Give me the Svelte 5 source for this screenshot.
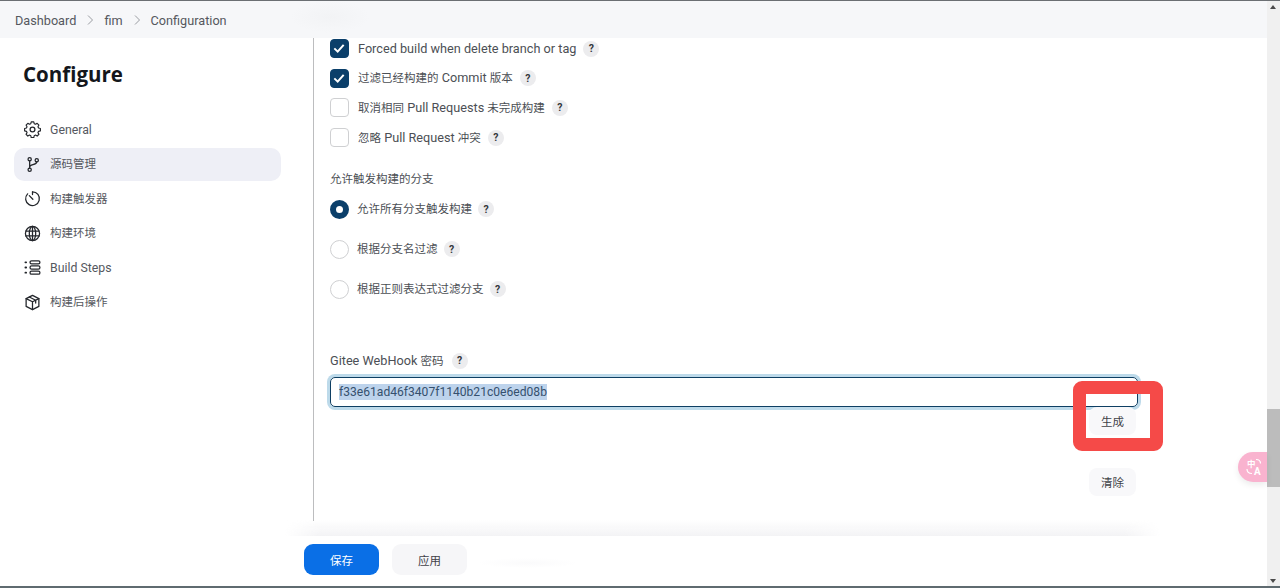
<script>
  const crumbs = ['Dashboard', 'fim', 'Configuration'];
  const nav = [
    { id: 'gear', label: 'General' },
    { id: 'branch', label: '源码管理', active: true },
    { id: 'timer', label: '构建触发器' },
    { id: 'globe', label: '构建环境' },
    { id: 'list', label: 'Build Steps' },
    { id: 'cube', label: '构建后操作' }
  ];
  const checks = [
    { label: 'Forced build when delete branch or tag', on: true },
    { label: '过滤已经构建的 Commit 版本', on: true },
    { label: '取消相同 Pull Requests 未完成构建', on: false },
    { label: '忽略 Pull Request 冲突', on: false }
  ];
  const radios = [
    { label: '允许所有分支触发构建', on: true },
    { label: '根据分支名过滤', on: false },
    { label: '根据正则表达式过滤分支', on: false }
  ];

  // chinese runs are set smaller than the latin ones
  const runs = (s) => s.split(/([\u4e00-\u9fff]+)/).filter(Boolean);
  const isZh = (s) => /[\u4e00-\u9fff]/.test(s);
</script>

{#snippet mixed(text)}
  <span class="mixed">{#each runs(text) as r}<span class:cjk={isZh(r)}>{r}</span>{/each}</span>
{/snippet}

<div class="page">
  <div class="col">
    <header class="crumbs">
      {#each crumbs as c, i}
        {#if i > 0}
          <svg class="chev" viewBox="0 0 10 12"><path d="M3 1.5 7.5 6 3 10.5" /></svg>
        {/if}
        <span>{c}</span>
      {/each}
    </header>

    <div class="body">
      <aside class="side">
        <h1>Configure</h1>
        <nav>
          {#each nav as n}
            <div class="nav-item" class:active={n.active}>
              <svg class="ico" viewBox="0 0 24 24">
                {#if n.id === 'gear'}
                  <circle cx="12" cy="12" r="3.400" />
                  <path d="M10 2.200h4l.7 2.900 2 .9 2.600-1.500 2.800 2.800-1.500 2.600.9 2 2.900.7v3.800l-2.900.7-.9 2 1.500 2.600-2.800 2.800-2.600-1.500-2 .9-.7 2.900h-4l-.7-2.900-2-.9-2.600 1.500-2.800-2.800 1.500-2.600-.9-2-2.900-.7v-3.800l2.900-.7.900-2-1.500-2.600 2.800-2.800 2.600 1.500 2-.9z" transform="translate(1.200 -.8) scale(.9)" />
                {:else if n.id === 'branch'}
                  <circle cx="8" cy="4.500" r="2.300" />
                  <circle cx="8" cy="19.500" r="2.300" />
                  <circle cx="18" cy="6" r="2.300" />
                  <path d="M8 6.800v10.400M8 15.500c0-4 9.800-2.500 10-7.200" />
                {:else if n.id === 'timer'}
                  <path d="M12 2.500a9.700 9.700 0 1 1-6.900 2.900" />
                  <path d="M12 2.500v4M12.500 13 7.500 8" />
                {:else if n.id === 'globe'}
                  <circle cx="12" cy="12" r="10" />
                  <ellipse cx="12" cy="12" rx="4.500" ry="10" />
                  <path d="M12 2v20M2.500 8.500h19M2.500 15.500h19" />
                {:else if n.id === 'list'}
                  <rect x="8.500" y="2.500" width="14" height="4.400" rx="2.200" />
                  <rect x="8.500" y="9.800" width="14" height="4.400" rx="2.200" />
                  <rect x="8.500" y="17.100" width="14" height="4.400" rx="2.200" />
                  <path class="dots" d="M2 4.700h1M2 12h1M2 19.300h1" />
                {:else}
                  <path d="M12 2 21 6.500v11L12 22 3 17.500v-11z" />
                  <path d="M3 6.500 12 11l9-4.500M12 11v11M7.500 4.300l9 4.500v4" />
                {/if}
              </svg>
              {@render mixed(n.label)}
            </div>
          {/each}
        </nav>
      </aside>

      <main class="form">
        <div class="checks">
          {#each checks as c}
            <div class="row">
              <span class="box" class:on={c.on}>
                {#if c.on}
                  <svg viewBox="0 0 12 12"><path d="M2.500 6.300 5 8.700 9.500 3.600" /></svg>
                {/if}
              </span>
              {@render mixed(c.label)}
              <span class="help">?</span>
            </div>
          {/each}
        </div>

        <div class="label sect">{@render mixed('允许触发构建的分支')}</div>
        <div class="radios">
          {#each radios as r}
            <div class="row">
              <span class="radio" class:on={r.on}></span>
              {@render mixed(r.label)}
              <span class="help">?</span>
            </div>
          {/each}
        </div>

        <div class="label hook">{@render mixed('Gitee WebHook 密码')}<span class="help">?</span></div>
        <div class="input"><span class="sel">f33e61ad46f3407f1140b21c0e6ed08b</span></div>
        <div class="actions">
          <button class="gen">生成</button>
          <button class="clear">清除</button>
        </div>
      </main>
    </div>

    <footer class="bar">
      <button class="save">保存</button>
      <button class="apply">应用</button>
    </footer>
  </div>

  <div class="track">
    <span class="arrow up"></span>
    <div class="thumb"></div>
    <span class="arrow down"></span>
  </div>

  <div class="mark"></div>
  <div class="bubble">
    <svg viewBox="0 0 29 30">
      <path d="M18 7.500c3 0 4.500 1.500 4.500 4M9 17c0 3 2 4.500 5 4.500" />
    </svg>
    <span class="zh">中</span><span class="en">A</span>
  </div>
</div>

<style>
  :global(body) {
    margin: 0;
    background: #fff;
  }
  .page {
    position: relative;
    width: 1280px;
    height: 588px;
    overflow: hidden;
    display: flex;
    border-top: 1px solid #6b6f73;
    border-bottom: 2px solid #5f6b70;
    box-sizing: border-box;
    font-family: Roboto, "Noto Sans CJK SC", sans-serif;
    font-size: 12.700px;
    color: #3f4248;
  }
  .mixed {
    line-height: 16px;
  }
  .cjk {
    font-size: 11.500px;
  }
  .col {
    flex: 1;
    min-width: 0;
    display: flex;
    flex-direction: column;
  }
  .crumbs {
    height: 37px;
    flex-shrink: 0;
    display: flex;
    align-items: center;
    padding: 1px 0 0 15px;
    box-sizing: border-box;
    background: radial-gradient(ellipse 40px 16px at 330px 16px, #f2f3f5, #f6f7f9);
    color: #55585e;
  }
  .chev {
    width: 10px;
    height: 12px;
    margin: 0 9px 0 9px;
    fill: none;
    stroke: #9a9da2;
    stroke-width: 1;
  }
  .body {
    flex: 1;
    min-height: 0;
    display: flex;
  }
  .side {
    width: 314px;
    flex-shrink: 0;
    box-sizing: border-box;
    padding: 0 32px 0 14px;
    margin-bottom: 15px;
    border-right: 1px solid #bcbdbf;
  }
  h1 {
    margin: 22px 0 0 9px;
    font-family: "Open Sans", sans-serif;
    font-size: 20.500px;
    line-height: 28px;
    font-weight: 700;
    color: #14171c;
  }
  nav {
    margin-top: 25px;
    display: flex;
    flex-direction: column;
    gap: 1.600px;
  }
  .nav-item {
    height: 33px;
    display: flex;
    align-items: center;
    gap: 9px;
    padding-left: 10px;
    border-radius: 10px;
    color: #55585e;
    font-size: 12.300px;
  }
  .nav-item.active {
    background: #eeeff6;
  }
  .ico {
    width: 17px;
    height: 17px;
    flex-shrink: 0;
    fill: none;
    stroke: #23262b;
    stroke-width: 1.800;
    stroke-linejoin: round;
    stroke-linecap: round;
  }
  .ico .dots {
    stroke-width: 2.600;
  }
  .form {
    flex: 1;
    min-width: 0;
    box-sizing: border-box;
    padding: 0 0 0 16px;
    margin-top: -4px;
  }
  .checks .row {
    height: 29.600px;
    gap: 9px;
  }
  .row {
    display: flex;
    align-items: center;
    color: #4c4f55;
  }
  .box {
    width: 19px;
    height: 19px;
    box-sizing: border-box;
    border: 1.500px solid #cfd0d2;
    border-radius: 4px;
    display: flex;
    flex-shrink: 0;
  }
  .box.on {
    background: #0b3f6a;
    border-color: #0b3f6a;
  }
  .box svg {
    width: 16px;
    height: 16px;
    fill: none;
    stroke: #fff;
    stroke-width: 1.500;
  }
  .help {
    display: inline-flex;
    align-items: center;
    justify-content: center;
    width: 16px;
    height: 16px;
    border-radius: 50%;
    background: #ececee;
    color: #33363b;
    font-size: 10.500px;
    font-weight: 700;
  }
  .checks .help,
  .radios .help {
    margin-left: -2px;
  }
  .hook .help {
    margin-left: 8px;
  }
  .label {
    color: #4c4f55;
  }
  .sect {
    margin-top: 18px;
    line-height: 18px;
  }
  .radios {
    margin-top: 1px;
  }
  .radios .row {
    height: 40px;
    gap: 8px;
  }
  .radio {
    width: 19px;
    height: 19px;
    box-sizing: border-box;
    border: 1.500px solid #cfd0d2;
    border-radius: 50%;
    flex-shrink: 0;
  }
  .radio.on {
    border: 6.500px solid #0b3f6a;
    background: #fff;
  }
  .hook {
    margin-top: 44px;
    display: flex;
    align-items: center;
    line-height: 16px;
  }
  .input {
    margin: 8px 0 0;
    height: 30px;
    box-sizing: border-box;
    width: 808px;
    border: 1.500px solid #0e3f63;
    border-radius: 5px;
    box-shadow: 0 0 0 3px #bddaea;
    display: flex;
    align-items: center;
    padding-left: 8px;
    font-size: 12.100px;
    color: #35506e;
  }
  .sel {
    background: #bdd3ec;
    line-height: 16px;
  }
  .actions {
    display: flex;
    flex-direction: column;
    align-items: flex-end;
    width: 806px;
    gap: 33px;
  }
  button {
    width: 47px;
    height: 28px;
    border: none;
    border-radius: 8px;
    background: #f8f8fa;
    font: inherit;
    font-size: 11.500px;
    color: #3f4248;
    padding: 0;
  }
  .track {
    width: 13px;
    flex-shrink: 0;
    background: #f0f0f0;
    position: relative;
  }
  .thumb {
    position: absolute;
    top: 408px;
    left: 0;
    right: 0;
    height: 78px;
    background: #bcbcbc;
  }
  .arrow {
    position: absolute;
    left: 3px;
    border: 3.500px solid transparent;
  }
  .arrow.up {
    top: 4px;
    border-bottom: 4px solid #4a4a4a;
    border-top: none;
  }
  .arrow.down {
    bottom: 3px;
    border-top: 4px solid #4a4a4a;
    border-bottom: none;
  }
  .bar {
    height: 50px;
    flex-shrink: 0;
    display: flex;
    align-items: center;
    gap: 13px;
    padding-left: 304px;
    background: radial-gradient(ellipse 50px 5px at 528px 27px, #fafafb, #fff);
    position: relative;
  }
  .bar::before {
    content: "";
    position: absolute;
    left: 285px;
    width: 875px;
    top: -16px;
    height: 16px;
    background: linear-gradient(rgba(243, 243, 245, 0), #f3f3f5);
    mask-image: linear-gradient(90deg, transparent, #000 4%, #000 96%, transparent);
  }
  .bar button {
    width: 75px;
    height: 31px;
    margin-top: -3px;
    border-radius: 9px;
  }
  .save {
    background: #0a6fe6;
    color: #fff;
  }
  .apply {
    background: #f6f6f8;
  }
  .mark {
    position: absolute;
    left: 1073px;
    top: 380px;
    width: 90px;
    height: 70px;
    box-sizing: border-box;
    border: 13px solid #f54a48;
    border-radius: 9px;
  }
  .bubble {
    position: absolute;
    left: 1238px;
    top: 451px;
    width: 29px;
    height: 30px;
    border-radius: 15px 0 0 15px;
    background: #f9b3cf;
    box-shadow: 0 3px 6px rgba(0, 0, 0, .08);
    color: #fff;
    font-size: 8.500px;
    font-weight: 700;
    line-height: 10px;
  }
  .bubble svg {
    position: absolute;
    inset: 0;
    fill: none;
    stroke: #fff;
    stroke-width: 1.200;
  }
  .bubble .zh {
    position: absolute;
    left: 9px;
    top: 7px;
  }
  .bubble .en {
    position: absolute;
    left: 16px;
    top: 15px;
    font-size: 10px;
  }
</style>
